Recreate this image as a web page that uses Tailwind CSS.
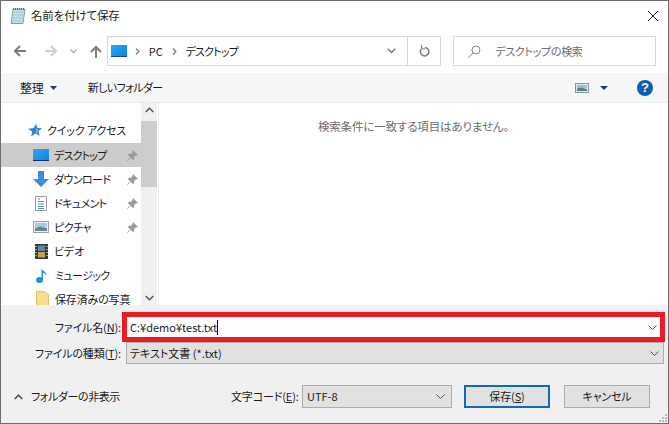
<!DOCTYPE html>
<html lang="ja">
<head>
  <meta charset="UTF-8" />
  <title>名前を付けて保存</title>
  <script src="https://cdn.jsdelivr.net/npm/@tailwindcss/browser@4"></script>
</head>
<body class="bg-white overflow-hidden">
  <div class="w-[669px] h-[424px] flex flex-col border border-[#6d6d6d] bg-white text-[11px] tracking-[-0.15px] leading-none text-[#1a1a1a] overflow-hidden font-['Noto_Sans_CJK_JP','Liberation_Sans',sans-serif] [font-feature-settings:'palt']">

    <!-- title bar -->
    <div class="h-[31px] shrink-0 flex items-center pb-[2px] pl-[9px] pr-[10px]">
      <svg width="16" height="17" viewBox="0 0 16 17">
        <path d="M3 2h12l-2 14.500H1z" fill="#c4e0ea" stroke="#8b9a9c" />
        <path d="M3.500 5h10M3 8h10M2.700 11h10M2.300 14h10" stroke="#a3c6d4" />
        <path d="M3.500 1v2M5.500 1v2M7.500 1v2M9.500 1v2M11.500 1v2M13.500 1v2" stroke="#55707d" />
      </svg>
      <span class="ml-[5px] text-[11.5px]">名前を付けて保存</span>
      <svg class="ml-auto" width="10" height="10" viewBox="0 0 10 10"><path d="M0 0l10 10M10 0L0 10" stroke="#222" fill="none" /></svg>
    </div>

    <!-- navigation row -->
    <div class="h-[41px] shrink-0 flex pt-[4px] pl-[13px] pr-[12px]">
      <div class="w-[93px] h-[30px] flex items-center">
        <svg width="13" height="12" viewBox="0 0 13 12"><path d="M1 6h11M6 1L1 6l5 5" stroke="#7d7d7d" stroke-width="2" fill="none" /></svg>
        <svg class="ml-[17px]" width="13" height="12" viewBox="0 0 13 12"><path d="M12 6H1M7 1l5 5-5 5" stroke="#cfcfcf" stroke-width="2" fill="none" /></svg>
        <svg class="ml-[13px]" width="7" height="5" viewBox="0 0 7 5"><path d="M.5.500l3 3 3-3" stroke="#a8a8a8" stroke-width="1.300" fill="none" /></svg>
        <svg class="ml-[13px]" width="12" height="13" viewBox="0 0 12 13"><path d="M6 13V2M1 7l5-5 5 5" stroke="#7d7d7d" stroke-width="2" fill="none" /></svg>
      </div>
      <div class="w-[335px] h-[30px] flex items-center border border-[#d9d9d9]">
        <div class="w-[16px] h-[12px] ml-[3px] bg-gradient-to-br from-[#2aa7f5] to-[#1583e0] border-b border-[#0b4f86]"></div>
        <svg class="ml-[8px]" width="5" height="7" viewBox="0 0 5 7"><path d="M1 .5l3 3-3 3" stroke="#7b7b7b" stroke-width="1.200" fill="none" /></svg>
        <span class="ml-[9px]">PC</span>
        <svg class="ml-[9px]" width="5" height="7" viewBox="0 0 5 7"><path d="M1 .5l3 3-3 3" stroke="#7b7b7b" stroke-width="1.200" fill="none" /></svg>
        <span class="ml-[9px] tracking-[-0.8px]">デスクトップ</span>
        <svg class="ml-auto mr-[11px]" width="9" height="6" viewBox="0 0 9 6"><path d="M.7.700l3.800 3.800L8.300.7" stroke="#7b7b7b" stroke-width="1.500" fill="none" /></svg>
        <div class="w-[33px] h-full flex items-center justify-center border-l border-[#d9d9d9]">
          <svg width="11" height="12" viewBox="0 0 11 12"><path d="M6 2.500A4.200 4.200 0 1 1 2 4.500" stroke="#7d7d7d" stroke-width="1.500" fill="none" /><path d="M2.500 0v4h3.500" stroke="#7d7d7d" stroke-width="1.200" fill="none" /></svg>
        </div>
      </div>
      <div class="ml-[12px] w-[203px] h-[30px] flex items-center border border-[#d9d9d9] text-[#6d6d6d]">
        <svg class="ml-[14px]" width="13" height="13" viewBox="0 0 13 13"><circle cx="8" cy="5" r="4" stroke="#8a8a8a" fill="none" /><path d="M5 8l-4.500 4.500" stroke="#8a8a8a" fill="none" /></svg>
        <span class="ml-[14px] tracking-[-0.3px]">デスクトップの検索</span>
      </div>
    </div>

    <!-- toolbar -->
    <div class="h-[30px] shrink-0 flex items-center bg-[#f5f6f7] border-b border-[#eaeaea] pl-[19px] pr-[15px]">
      <span class="text-[12px]">整理</span>
      <svg class="ml-[6px]" width="7" height="4" viewBox="0 0 7 4"><path d="M0 0h7L3.500 4z" fill="#1f3a5a" /></svg>
      <span class="ml-[31px] tracking-[-0.6px]">新しいフォルダー</span>
      <svg class="ml-auto" width="14" height="10" viewBox="0 0 14 10">
        <rect x=".5" y=".5" width="13" height="9" fill="#dfe9ee" stroke="#8b979e" />
        <path d="M2 2h10v3H2z" fill="#9cc0d8" />
        <path d="M2 8V5.500l4-1 6 1.500v2z" fill="#5f8088" />
      </svg>
      <svg class="ml-[11px]" width="8" height="4" viewBox="0 0 8 4"><path d="M0 0h8L4 4z" fill="#1f3a5a" /></svg>
      <div class="ml-[29px] w-[16px] h-[16px] rounded-full bg-[#0a5fb0] flex items-center justify-center text-white text-[13px] font-bold font-['Liberation_Sans',sans-serif]">?</div>
    </div>

    <!-- body -->
    <div class="h-[202px] shrink-0 flex">
      <div class="w-[140px] pt-[16px] overflow-hidden">
        <div class="h-[24px] flex items-center pl-[27px] pb-[1px]">
          <svg class="shrink-0" width="14" height="13" viewBox="0 0 14 13"><path d="M8 0l1.500 4 4.500.3-3.400 2.900 1.100 4.500L7.500 9.500 3 12.500l1.300-4.800L0 4.800l5.400-.5z" fill="#2f7fd0" /><path d="M7.800 3L9 5.300l2.500.2-2 1.700.6 2.600-2.400-1.400z" fill="#6db5ec" /></svg>
          <span class="ml-[5px] whitespace-nowrap">クイック アクセス</span>
        </div>
        <div class="h-[24px] flex items-center pl-[32px] bg-[#cccccc]">
          <div class="w-[16px] h-[12px] bg-gradient-to-br from-[#2aa7f5] to-[#1583e0] border-b border-[#0b2f56] shrink-0"></div>
          <span class="ml-[5px] tracking-[-0.8px]">デスクトップ</span>
          <svg class="ml-auto mr-[3px]" width="11" height="11" viewBox="0 0 11 11"><path d="M6 0l5 5-1 .5-1-.2-2 2 .2 2-1 1-2.500-2.500L.5 11 0 10.500l3.200-3.200L.7 4.800l1-1 2 .2 2-2L5.500 1z" fill="#9a9a9a" /></svg>
        </div>
        <div class="h-[24px] flex items-center pl-[32px]">
          <svg class="shrink-0" width="16" height="16" viewBox="0 0 16 16"><path d="M5 0h6v8h5l-8 8-8-8h5z" fill="#3b8ede" /></svg>
          <span class="ml-[5px] tracking-[-0.6px]">ダウンロード</span>
          <svg class="ml-auto mr-[3px]" width="11" height="11" viewBox="0 0 11 11"><path d="M6 0l5 5-1 .5-1-.2-2 2 .2 2-1 1-2.500-2.500L.5 11 0 10.500l3.200-3.200L.7 4.800l1-1 2 .2 2-2L5.500 1z" fill="#9a9a9a" /></svg>
        </div>
        <div class="h-[24px] flex items-center pl-[34px]">
          <svg class="shrink-0" width="12" height="15" viewBox="0 0 12 15"><path d="M.5.500h11v14H.5z" fill="#fff" stroke="#9a9a9a" /><path d="M3 3h2M3 5.500h6M3 8h6M3 10.500h6M3 12.500h6" stroke="#5f93a8" /></svg>
          <span class="ml-[7px] tracking-[-0.6px]">ドキュメント</span>
          <svg class="ml-auto mr-[3px]" width="11" height="11" viewBox="0 0 11 11"><path d="M6 0l5 5-1 .5-1-.2-2 2 .2 2-1 1-2.500-2.500L.5 11 0 10.500l3.200-3.200L.7 4.800l1-1 2 .2 2-2L5.500 1z" fill="#9a9a9a" /></svg>
        </div>
        <div class="h-[24px] flex items-center pl-[32px]">
          <svg class="shrink-0" width="16" height="12" viewBox="0 0 16 12"><rect x=".5" y=".5" width="15" height="11" fill="#e8eef2" stroke="#9aa4aa" /><path d="M2 2h12v4H2z" fill="#a8cbe0" /><path d="M2 10V7l5-1.500L14 7v3z" fill="#5f8a8e" /></svg>
          <span class="ml-[5px] tracking-[-0.5px]">ピクチャ</span>
          <svg class="ml-auto mr-[3px]" width="11" height="11" viewBox="0 0 11 11"><path d="M6 0l5 5-1 .5-1-.2-2 2 .2 2-1 1-2.500-2.500L.5 11 0 10.500l3.200-3.200L.7 4.800l1-1 2 .2 2-2L5.500 1z" fill="#9a9a9a" /></svg>
        </div>
        <div class="h-[24px] flex items-center pl-[34px]">
          <svg class="shrink-0" width="13" height="15" viewBox="0 0 13 15"><rect width="13" height="15" fill="#2e3a42" /><path d="M1 2v1M1 5v1M1 8v1M1 11v1M12 2v1M12 5v1M12 8v1M12 11v1" stroke="#fff" /><rect x="3" y="1.500" width="7" height="5.500" fill="#5d86a0" /><rect x="3" y="8" width="7" height="5.500" fill="#c9a14d" /></svg>
          <span class="ml-[6px]">ビデオ</span>
        </div>
        <div class="h-[24px] flex items-center pl-[35px]">
          <svg class="shrink-0" width="11" height="15" viewBox="0 0 11 15"><ellipse cx="3.500" cy="12" rx="3.500" ry="3" fill="#1f8fe0" /><path d="M5.500 12V0c.5 3 5.500 3.500 5 7.500C10 5.500 7.500 5 7 5v7z" fill="#1f8fe0" /></svg>
          <span class="ml-[8px] tracking-[-0.6px]">ミュージック</span>
        </div>
        <div class="h-[24px] flex items-center pl-[35px]">
          <svg class="shrink-0" width="13" height="16" viewBox="0 0 13 16"><path d="M.5.500h8l4 3v12H.5z" fill="#f8dd8c" stroke="#e0c168" /></svg>
          <span class="ml-[6px] whitespace-nowrap">保存済みの写真</span>
        </div>
      </div>
      <div class="w-[16px] bg-[#f0f0f0] flex flex-col items-center">
        <svg class="mt-[4px]" width="9" height="6" viewBox="0 0 9 6"><path d="M.7 5l3.800-3.800L8.300 5" stroke="#555" stroke-width="1.500" fill="none" /></svg>
        <div class="mt-[8px] w-full h-[66px] bg-[#cdcdcd]"></div>
        <svg class="mt-auto mb-[4px]" width="9" height="6" viewBox="0 0 9 6"><path d="M.7 1l3.800 3.800L8.300 1" stroke="#555" stroke-width="1.500" fill="none" /></svg>
      </div>
      <div class="flex-1 border-l border-[#eaeaea] ml-[1px] flex justify-center pt-[18px] text-[#6d6d6d]">
        <span class="h-fit text-[11.5px]">検索条件に一致する項目はありません。</span>
      </div>
    </div>

    <!-- bottom panel -->
    <div class="relative flex-1 bg-[#f0f0f0] flex flex-col">
      <div class="mt-[7px] flex items-center pr-[2px]">
        <span class="w-[120px] text-right whitespace-nowrap">ファイル名(<u>N</u>):</span>
        <div class="ml-[1px] w-[543px] h-[30px] border-[5px] border-[#ed1c24] bg-white flex items-center pl-[3px] pr-[3px]">
          <span class="border-r border-black h-[15px] leading-[15px] tracking-normal">C:¥demo¥test.txt</span>
          <svg class="ml-auto" width="9" height="5" viewBox="0 0 9 5"><path d="M.5.500l4 4 4-4" stroke="#555" fill="none" /></svg>
        </div>
      </div>
      <div class="flex items-center pr-[4px]">
        <span class="w-[120px] text-right whitespace-nowrap">ファイルの種類(<u>T</u>):</span>
        <div class="ml-[5px] w-[538px] h-[22px] border border-[#adadad] bg-[#e1e1e1] flex items-center pl-[3px] pr-[4px]">
          <span class="tracking-normal">テキスト文書 (*.txt)</span>
          <svg class="ml-auto" width="9" height="5" viewBox="0 0 9 5"><path d="M.5.500l4 4 4-4" stroke="#555" fill="none" /></svg>
        </div>
      </div>
      <div class="mt-[21px] flex items-center pl-[13px]">
        <svg class="shrink-0" width="9" height="6" viewBox="0 0 9 6"><path d="M.7 5l3.800-3.800L8.300 5" stroke="#444" stroke-width="1.400" fill="none" /></svg>
        <span class="ml-[8px] w-[200px] whitespace-nowrap tracking-[-0.4px]">フォルダーの非表示</span>
        <span class="w-[66px] text-right whitespace-nowrap">文字コード(<u>E</u>):</span>
        <div class="ml-[5px] w-[150px] h-[23px] border border-[#adadad] bg-[#e1e1e1] flex items-center pl-[4px] pr-[6px]">
          <span class="tracking-normal">UTF-8</span>
          <svg class="ml-auto" width="9" height="5" viewBox="0 0 9 5"><path d="M.5.500l4 4 4-4" stroke="#555" fill="none" /></svg>
        </div>
        <div class="ml-[12px] w-[86px] h-[23px] border-2 border-[#0f6cb4] bg-[#e1e1e1] flex items-center justify-center">保存(<u>S</u>)</div>
        <div class="ml-[14px] w-[86px] h-[23px] border border-[#adadad] bg-[#e1e1e1] flex items-center justify-center">キャンセル</div>
      </div>
      <svg class="absolute right-[1px] bottom-[1px]" width="9" height="9" viewBox="0 0 9 9"><path d="M7 1h2v2H7zM4 4h2v2H4zM7 4h2v2H7zM1 7h2v2H1zM4 7h2v2H4zM7 7h2v2H7z" fill="#b9b9b9" /></svg>
    </div>
  </div>
</body>
</html>
